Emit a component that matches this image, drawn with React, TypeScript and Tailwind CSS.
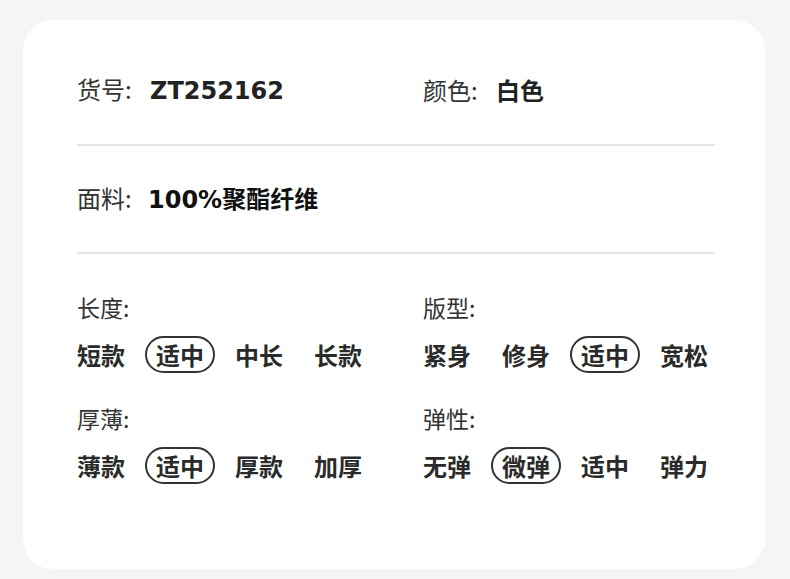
import React from 'react';

type Attr = {
  label: string;
  options: string[];
  active: number;
};

const cjk = "font-['Noto_Sans_CJK_SC','Noto_Sans',sans-serif]";
const latin = "font-['DejaVu_Sans','Noto_Sans_CJK_SC',sans-serif]";

const attrs: Attr[] = [
  { label: '长度:', options: ['短款', '适中', '中长', '长款'], active: 1 },
  { label: '版型:', options: ['紧身', '修身', '适中', '宽松'], active: 2 },
  { label: '厚薄:', options: ['薄款', '适中', '厚款', '加厚'], active: 1 },
  { label: '弹性:', options: ['无弹', '微弹', '适中', '弹力'], active: 1 },
];

function AttrBlock({ label, options, active }: Attr) {
  return (
    <div className="flex flex-col">
      <div className="h-[32px] leading-[32px] text-[23px] text-[#333]">{label}</div>
      <div className="mt-[13px] grid grid-cols-[repeat(4,79px)] items-center h-[36px]">
        {options.map((o, i) =>
          i === active ? (
            <div key={o} className="flex">
              <span className="-ml-[11px] h-[37px] leading-[33px] px-[9px] rounded-full border-2 border-[#333] text-[24px] font-bold text-[#2a2a2a] whitespace-nowrap">
                {o}
              </span>
            </div>
          ) : (
            <span key={o} className="h-[36px] leading-[36px] text-[24px] font-bold text-[#2a2a2a] whitespace-nowrap">
              {o}
            </span>
          )
        )}
      </div>
    </div>
  );
}

export default function App() {
  return (
    <div className={`w-[790px] h-[579px] bg-[#f5f5f5] pt-[20px] pl-[23px] ${cjk}`}>
      <div className="w-[742px] h-[549px] bg-white rounded-[30px] pl-[54px] pr-[50px] pt-[51px]">
        {/* 货号 / 颜色 */}
        <div className="grid grid-cols-[346px_1fr] h-[32px] items-center">
          <div className="flex items-baseline">
            <span className="w-[73px] text-[24px] text-[#333]">货号:</span>
            <span className={`text-[24px] font-bold text-[#222] ${latin}`}>ZT252162</span>
          </div>
          <div className="flex items-baseline">
            <span className="w-[73px] text-[24px] text-[#333]">颜色:</span>
            <span className="text-[24px] font-bold text-[#222]">白色</span>
          </div>
        </div>
        <div className="mt-[41px] h-[2px] bg-[#e6e6e6]" />

        {/* 面料 */}
        <div className="mt-[34px] flex items-baseline h-[32px]">
          <span className="w-[71px] text-[24px] text-[#333]">面料:</span>
          <span className="text-[24px] font-bold text-[#111]">
            <span className={latin}>100%</span>聚酯纤维
          </span>
        </div>
        <div className="mt-[40px] h-[2px] bg-[#e6e6e6]" />

        {/* 属性 */}
        <div className="mt-[37px] grid grid-cols-[346px_1fr] gap-y-[30px]">
          {attrs.map((a) => (
            <AttrBlock key={a.label} {...a} />
          ))}
        </div>
      </div>
    </div>
  );
}
